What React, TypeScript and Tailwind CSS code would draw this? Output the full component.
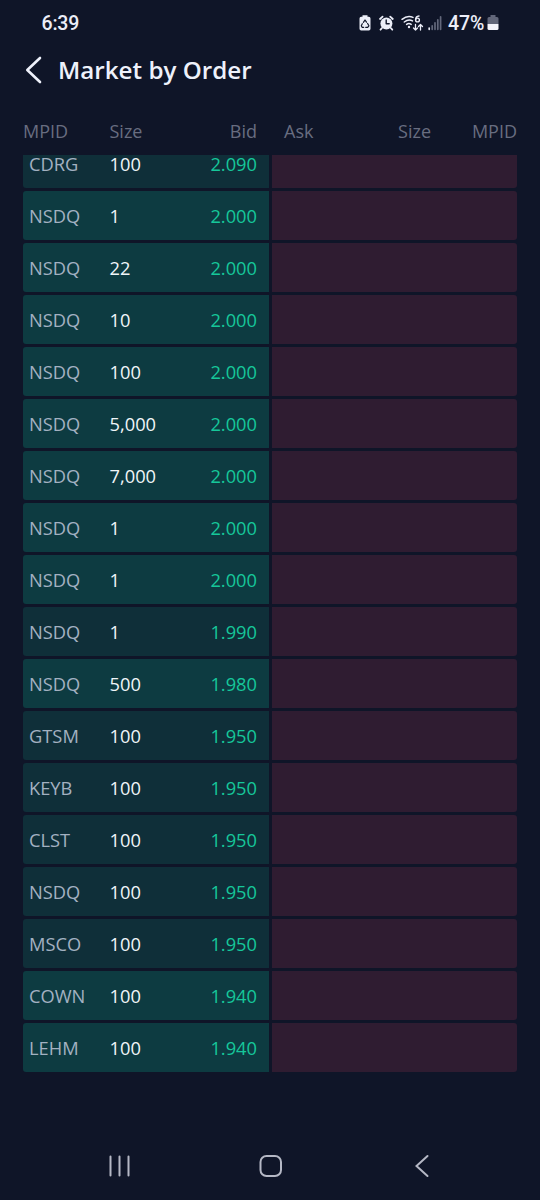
import React from "react";

type Order = { mpid: string; size: string; bid: string; tone: "deep" | "bright" };

const orders: Order[] = [
  { mpid: "CDRG", size: "100", bid: "2.090", tone: "deep" },
  { mpid: "NSDQ", size: "1", bid: "2.000", tone: "bright" },
  { mpid: "NSDQ", size: "22", bid: "2.000", tone: "bright" },
  { mpid: "NSDQ", size: "10", bid: "2.000", tone: "bright" },
  { mpid: "NSDQ", size: "100", bid: "2.000", tone: "bright" },
  { mpid: "NSDQ", size: "5,000", bid: "2.000", tone: "bright" },
  { mpid: "NSDQ", size: "7,000", bid: "2.000", tone: "bright" },
  { mpid: "NSDQ", size: "1", bid: "2.000", tone: "bright" },
  { mpid: "NSDQ", size: "1", bid: "2.000", tone: "bright" },
  { mpid: "NSDQ", size: "1", bid: "1.990", tone: "deep" },
  { mpid: "NSDQ", size: "500", bid: "1.980", tone: "bright" },
  { mpid: "GTSM", size: "100", bid: "1.950", tone: "deep" },
  { mpid: "KEYB", size: "100", bid: "1.950", tone: "deep" },
  { mpid: "CLST", size: "100", bid: "1.950", tone: "deep" },
  { mpid: "NSDQ", size: "100", bid: "1.950", tone: "deep" },
  { mpid: "MSCO", size: "100", bid: "1.950", tone: "deep" },
  { mpid: "COWN", size: "100", bid: "1.940", tone: "bright" },
  { mpid: "LEHM", size: "100", bid: "1.940", tone: "bright" },
];

const tones = { deep: "bg-[#0f2f39]", bright: "bg-[#0d3b41]" };

function StatusIcons() {
  return (
    <svg width="90" height="20" viewBox="355 13 90 20" fill="none" stroke="#eceef8" strokeLinecap="round" strokeLinejoin="round">
      <path d="M362.500 15.200h5v1.600h1.300q1.700 0 1.700 1.700v10.200q0 1.700-1.700 1.700h-7.600q-1.700 0-1.700-1.700V18.500q0-1.700 1.700-1.700h1.300z" fill="#eceef8" stroke="none" />
      <path d="M363.400 22.300l1.600-2.300 1.500 2.200M367.600 23.500l1.300 2.300-1.200 1.500h-2M363.700 27.300h-1.600l-.8-1.500 1-2.100" stroke="#11162a" strokeWidth="1.200" />
      <circle cx="386.400" cy="23.500" r="6" fill="#eceef8" stroke="none" />
      <path d="M380 19l2.600-2.400M392.800 19l-2.600-2.400M382 28l-1.500 1.700M390.800 28l1.500 1.700" strokeWidth="1.800" />
      <path d="M386.200 20v3.800h3" stroke="#11162a" strokeWidth="1.400" />
      <path d="M402 19.300q5.500-4.300 11-1.900M404.300 22q4.100-3.200 8.200-1.100M406.600 24.400q2.300-1.600 4.600 0" strokeWidth="1.500" />
      <circle cx="409" cy="27" r="1.200" fill="#eceef8" stroke="none" />
      <path d="M419 16q-3.400.3-3.400 3.800" strokeWidth="1.400" />
      <circle cx="417.500" cy="20" r="1.900" strokeWidth="1.400" />
      <path d="M415.500 24.500v5.500M413.500 28l2 2 2-2M420.500 30v-5.500M418.500 26.500l2-2 2 2" strokeWidth="1.300" />
      <path d="M429.200 28v1.300" strokeWidth="1.700" />
      <path d="M432.200 25.800v3.500M435 22.800v6.500M437.800 19.800v9.500M440.600 16.800v12.500" stroke="#62677a" strokeWidth="1.700" />
    </svg>
  );
}

function StatusBar() {
  return (
    <header className="flex h-[46px] shrink-0 items-center pl-[41.500px] pr-[41px] font-['Roboto'] text-[19.500px] font-medium leading-none text-[#eceef8]">
      <span className="pt-[2px] tracking-[-0.2px]">6:39</span>
      <div className="ml-auto flex items-center">
        <StatusIcons />
        <span className="ml-[3px] w-[37px] whitespace-nowrap pt-[2px] tracking-[-0.1px]">47%</span>
        <svg className="ml-[2px]" width="12" height="18" viewBox="0 0 12 18">
          <path d="M3.500 1h5v2H10q1.500 0 1.500 1.500V10H.5V4.500Q.5 3 2 3h1.500z" fill="#62677a" />
          <path d="M.5 10h11v4.500q0 1.500-1.500 1.500H2Q.5 16 .5 14.500z" fill="#f4f5fc" />
        </svg>
      </div>
    </header>
  );
}

export default function App() {
  return (
    <div className="flex h-[1200px] w-[540px] flex-col overflow-hidden bg-[#0f1528] font-['Open_Sans',sans-serif]">
      <StatusBar />
      <div className="flex h-12 shrink-0 items-center pl-[25px]">
        <svg width="18" height="28" viewBox="0 0 18 28" fill="none" stroke="#eef1fb" strokeWidth="2.600" strokeLinecap="round" strokeLinejoin="round">
          <path d="M15 2L2.300 14 15 26" />
        </svg>
        <h1 className="ml-[15px] text-[24.200px] font-semibold leading-none text-[#eef1fb]">Market by Order</h1>
      </div>
      <div className="flex h-[61px] shrink-0 items-center px-[23px] pt-3 text-[18px] leading-none text-[#686d80]">
        <span className="w-[86.500px]">MPID</span>
        <span className="w-[80px]">Size</span>
        <span className="w-[67.500px] text-right">Bid</span>
        <span className="ml-[27px] w-[70px]">Ask</span>
        <span className="w-[77px] text-right">Size</span>
        <span className="ml-auto">MPID</span>
      </div>
      <main className="flex h-[917px] shrink-0 flex-col justify-end gap-[3px] overflow-hidden px-[23px] text-[18.300px] leading-[19px]">
        {orders.map((o, i) => (
          <div key={i} className="grid h-[49px] shrink-0 grid-cols-2 gap-[3px]">
            <div className={`flex items-center rounded-l-[3px] pl-[6px] pr-[11.500px] ${tones[o.tone]}`}>
              <span className="w-[80.500px] text-[#a3b1c1]">{o.mpid}</span>
              <span className="text-[#f0f5f8]">{o.size}</span>
              <span className="ml-auto text-[#16c79a]">{o.bid}</span>
            </div>
            <div className="rounded-r-[3px] bg-[#2f1c31]" />
          </div>
        ))}
      </main>
      <nav className="mt-[80px] flex shrink-0 items-center justify-between pl-[108px] pr-[110px]">
        <svg width="24" height="28" viewBox="0 0 24 28" stroke="#b5b8c5" strokeWidth="2" strokeLinecap="round">
          <path d="M2.500 4.500v19M11.500 4.500v19M20.500 4.500v19" />
        </svg>
        <svg className="-ml-[4px]" width="24" height="28" viewBox="0 0 24 28" fill="none" stroke="#b5b8c5" strokeWidth="2">
          <rect x="1.500" y="4" width="20.500" height="20" rx="6" />
        </svg>
        <svg width="16" height="28" viewBox="0 0 16 28" fill="none" stroke="#b5b8c5" strokeWidth="2" strokeLinecap="round">
          <path d="M13.500 4L2.500 14l11 10" />
        </svg>
      </nav>
    </div>
  );
}
